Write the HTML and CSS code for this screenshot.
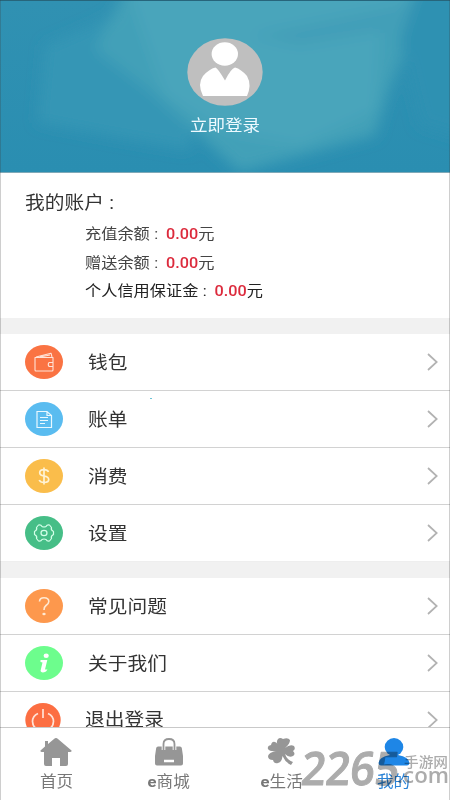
FILE: index.html
```
<!DOCTYPE html>
<html lang="zh-CN">
<head>
<meta charset="utf-8">
<title>我的</title>
<link rel="stylesheet" href="styles.css">
</head>
<body>
<div class="app">
  <header class="hero">
    <svg class="hero-bg" viewBox="0 0 450 172" preserveAspectRatio="none">
      <defs>
        <filter id="soft" x="-10%" y="-10%" width="120%" height="120%"><feGaussianBlur stdDeviation="7"/></filter>
        <linearGradient id="base" x1="0" y1="0" x2="0" y2="1"><stop offset="0" stop-color="#3091b2"/><stop offset="1" stop-color="#2a8eb1"/></linearGradient>
      </defs>
      <rect width="450" height="172" fill="url(#base)"/>
      <g filter="url(#soft)">
        <path d="M45 45 125 10 200 20 190 150 110 136 38 122Z" fill="#3596b5"/>
        <path d="M95 48 130-20H435L390 85 375 135 240 172 205 140 150 90Z" fill="#42a0b8"/>
        <path d="M125-20H420L380 30 375 110 300 145 220 130 165 95Z" fill="#4aa5bb"/>
        <path d="M250 35 420 0 400 28 300 45Z" fill="#429fb8"/>
        <path d="M400 40 420-20H470V140L420 125Z" fill="#2d91b2"/>
      </g>
    </svg>
    <svg class="avatar" viewBox="0 0 76 68">
      <ellipse cx="38" cy="34" rx="37.7" ry="33.7" fill="#bfbfbf"/>
      <ellipse cx="37.8" cy="16" rx="13.2" ry="11.7" fill="#fff"/>
      <path d="M28.5 29.5Q31 30.5 38 42.5 44 30.5 48 29.5 54 31 60 38 65 47 60 58H16Q10 46 16 38 22 31 28.5 29.5Z" fill="#fff"/>
    </svg>
    <div class="login"><span class="wide">立即登录</span></div>
  </header>

  <section class="account">
    <h1><span class="wide">我的账户<i class="colon title-colon">:</i></span></h1>
    <p><span class="wide">充值余额<i class="colon">:</i><b>0.00</b>元</span></p>
    <p><span class="wide">赠送余额<i class="colon">:</i><b>0.00</b>元</span></p>
    <p class="dark"><span class="wide">个人信用保证金<i class="colon">:</i><b>0.00</b>元</span></p>
  </section>

  <main class="menu">
    <div class="group">
      <div class="row">
        <svg class="icon" viewBox="0 0 38 34"><ellipse cx="19" cy="17" rx="19" ry="17" fill="#fa7343"/><g fill="none" stroke="#ffe3d8" stroke-width="1.1" stroke-linejoin="round"><path d="M10 12.5H28V25Q28 26 27 26H11Q10 26 10 25ZM28 17.5H24Q22.500 19.200 24 21.500H28M11 12 26 8.200 27 12M15 12l10-2"/></g></svg>
        <span class="label"><span class="wide">钱包</span></span>
        <svg class="chevron" viewBox="0 0 11 18"><path d="M1 1 9.700 9 1 17"/></svg>
      </div>
      <div class="row">
        <svg class="icon" viewBox="0 0 38 34"><ellipse cx="19" cy="17" rx="19" ry="17" fill="#5abcf0"/><path d="M12 9.500H22L26.500 13.500V25.500H12ZM22 9.500V13.500H26.500M15 15.500H23M15 18.500H23M15 21.500H20" fill="none" stroke="#e9f8ff" stroke-width="1.200"/></svg>
        <span class="label"><span class="wide">账单</span></span>
        <svg class="chevron" viewBox="0 0 11 18"><path d="M1 1 9.700 9 1 17"/></svg>
      </div>
      <div class="row">
        <svg class="icon" viewBox="0 0 38 34"><ellipse cx="19" cy="17" rx="19" ry="17" fill="#fabd4b"/><path d="M23.500 13Q22.500 10.700 19 10.700 14.700 10.700 14.700 13.700 14.700 16.300 19 17 23.700 17.700 23.700 20.500 23.700 23.500 19 23.500 15.200 23.500 14.200 21M19 8.500V25.500" fill="none" stroke="#fff3d5" stroke-width="1.700"/></svg>
        <span class="label"><span class="wide">消费</span></span>
        <svg class="chevron" viewBox="0 0 11 18"><path d="M1 1 9.700 9 1 17"/></svg>
      </div>
      <div class="row">
        <svg class="icon" viewBox="0 0 38 34"><ellipse cx="19" cy="17" rx="19" ry="17" fill="#46be87"/><g fill="none" stroke="#d4ffe9" stroke-width="1.200" stroke-linejoin="round"><path d="M13.500 9Q16 8.500 17 10.500 19 11.500 21 10.500 22 8.500 24.500 9L26.500 11.500Q25.500 14 28.500 15.500V18.500Q25.500 20 26.500 22.500L24.500 25Q22 25.500 21 23.500 19 22.500 17 23.500 16 25.500 13.500 25L11.500 22.500Q12.500 20 9.500 18.500V15.500Q12.500 14 11.500 11.500Z"/><ellipse cx="19" cy="17" rx="3" ry="2.700"/></g></svg>
        <span class="label"><span class="wide">设置</span></span>
        <svg class="chevron" viewBox="0 0 11 18"><path d="M1 1 9.700 9 1 17"/></svg>
      </div>
    </div>
    <div class="group">
      <div class="row">
        <svg class="icon" viewBox="0 0 38 34"><ellipse cx="19" cy="17" rx="19" ry="17" fill="#fd984d"/><path d="M14.500 12.500Q14.700 8.800 19 8.800 23.800 8.800 23.800 12.500 23.800 14.500 21 16.500 19 18 19 21" fill="none" stroke="#ffe9d2" stroke-width="1.600"/><ellipse cx="19" cy="25" rx="1.700" ry="1.300" fill="#ffe9d2"/></svg>
        <span class="label"><span class="wide">常见问题</span></span>
        <svg class="chevron" viewBox="0 0 11 18"><path d="M1 1 9.700 9 1 17"/></svg>
      </div>
      <div class="row">
        <svg class="icon" viewBox="0 0 38 34"><ellipse cx="19" cy="17" rx="19" ry="17" fill="#6dfd8d"/><ellipse cx="21.200" cy="9.700" rx="2.600" ry="2.200" fill="#fff"/><path d="M15.500 14H22.300L20 23.500H22.500L21 25.500Q16.500 27.500 15.500 25L17.500 16.500 15.500 16Z" fill="#fff"/></svg>
        <span class="label"><span class="wide">关于我们</span></span>
        <svg class="chevron" viewBox="0 0 11 18"><path d="M1 1 9.700 9 1 17"/></svg>
      </div>
      <div class="row logout">
        <svg class="icon" viewBox="0 0 36 34"><ellipse cx="18" cy="17" rx="17.700" ry="17" fill="#fc6e42"/><path d="M13 10.500Q7.500 13 7.500 18.500 8 27 18 27 28 27 28.500 18.500 28.500 13 23 10.500M18 6V15" fill="none" stroke="#ffe2d6" stroke-width="1.700"/></svg>
        <span class="label"><span class="wide">退出登录</span></span>
        <svg class="chevron" viewBox="0 0 11 18"><path d="M1 1 9.700 9 1 17"/></svg>
      </div>
    </div>
  </main>

  <nav class="tabs">
    <div class="tab">
      <svg class="tab-icon" viewBox="0 0 32 28"><path d="M16 0Q17 0 18 1L31.500 12.500Q32 14 30 14H28V26Q28 28 26 28H20V20H12V28H6Q4 28 4 26V14H2Q0 14 .5 12.500L5 8.500V3H8V6L14 1Q15 0 16 0Z"/></svg>
      <span class="wide">首页</span>
    </div>
    <div class="tab">
      <svg class="tab-icon" viewBox="0 0 32 28"><path fill-rule="evenodd" d="M5 8.500H27Q28.500 8.500 28.800 10L30 18V25.500Q30 27.500 28 27.500H4Q2 27.500 2 25.500V18L3.200 10Q3.500 8.500 5 8.500ZM11 21.800V24.300H21V21.800Z"/><path d="M10.500 12V6Q10.500 1 16 1T21.500 6V12" fill="none" stroke="#fff" stroke-width="3.600"/><path d="M10.500 12V6Q10.500 1 16 1T21.500 6V12" fill="none" stroke="#969696" stroke-width="1.800"/></svg>
      <span class="wide"><strong>e</strong>商城</span>
    </div>
    <div class="tab">
      <svg class="tab-icon" viewBox="0 0 32 28"><path d="M15 11Q10 5 13 1 15-1 18 1 23-1 25 2 25 6 20 10 25 6 29 8 31 11 28 13 31 16 28 18 24 20 20 16 22 22 28 24L26 27Q20 24 17.500 18 17 24 13 25 9 26 8 22 3 22 3 18 4 14 12 13 5 14 3 11 2 8 6 7 7 3 10 4 13 5 15 11Z"/></svg>
      <span class="wide"><strong>e</strong>生活</span>
    </div>
    <div class="tab active">
      <svg class="tab-icon" viewBox="0 0 32 28"><ellipse cx="16" cy="9" rx="9.300" ry="9"/><path d="M12 15H20V17Q31 19 31.500 25 31 27.500 29 27.500H3Q1 27.500.5 25 1 19 12 17Z"/></svg>
      <span class="wide">我的</span>
    </div>
  </nav>
  <svg class="watermark" viewBox="0 0 150 50">
    <text x="0" y="38.500" class="wm-number" textLength="98" lengthAdjust="spacingAndGlyphs" transform="translate(4 0) skewX(-6)">2265</text>
    <text x="104" y="21" class="wm-name" textLength="44" lengthAdjust="spacingAndGlyphs">手游网</text>
    <text x="97" y="37" class="wm-domain" textLength="52" lengthAdjust="spacingAndGlyphs">.com</text>
  </svg>
  <i class="speck"></i>
</div>
</body>
</html>
```

FILE: styles.css
```
* { box-sizing: border-box; }
body { margin: 0; background: #fff; font-family: Roboto, "Noto Sans CJK SC", sans-serif; }
.app {
  position: relative;
  width: 450px;
  height: 800px;
  display: flex;
  flex-direction: column;
  overflow: hidden;
  color: #333;
}
.app::after {
  content: "";
  position: absolute;
  inset: 0;
  border: solid rgba(60, 60, 60, .25);
  border-width: 0 1px;
  pointer-events: none;
}
.wide { display: inline-block; white-space: nowrap; transform: scaleX(1.095); transform-origin: left; }

.hero {
  position: relative;
  flex: none;
  height: 173px;
  padding-top: 37px;
  display: flex;
  flex-direction: column;
  align-items: center;
  border-top: 1px solid #27657b;
  border-bottom: 1px solid #7fa9b8;
}
.hero-bg { position: absolute; inset: 0; width: 100%; height: 100%; }
.avatar { position: relative; width: 76px; height: 68px; }
.login { position: relative; margin-top: 8px; font-size: 16px; line-height: 24px; color: #eefaff; }
.login .wide { transform-origin: center; }

.account { flex: none; height: 145px; padding: 15px 0 0 25px; }
.account h1 { margin: 0 0 2px; font-size: 18px; font-weight: 400; line-height: 30px; }
.account p { margin: 0 0 0 60px; font-size: 15px; line-height: 28.700px; color: #444; }
.account p .wide { transform: scaleX(1.08); }
.account .dark { color: #222; }
.account b { font-weight: 500; color: #dc2a3c; }
.colon { display: inline-block; width: 15px; padding-left: 4px; font-style: normal; }
.title-colon { padding-left: 5px; }

.menu { flex: none; height: 409px; overflow: hidden; }
.group { border-top: 16px solid #f1f1f1; }
.row {
  height: 57px;
  padding: 0 12px 0 25px;
  display: flex;
  align-items: center;
  border-bottom: 1px solid #d2d2d2;
}
.group .row:last-child { border-bottom-color: #eee; }
.icon { width: 38px; height: 34px; }
.label { flex: 1; margin-left: 24.500px; padding-top: 2px; font-size: 18px; line-height: 28px; }
.chevron { width: 11px; height: 18px; fill: none; stroke: #b2b2b2; stroke-width: 1.700; }
.logout { align-items: flex-start; padding-top: 11px; }
.logout .icon { width: 36px; }
.logout .label { margin: 1px 0 0 24px; }
.logout .chevron { margin-top: 8px; }

.tabs { flex: 1; display: flex; border-top: 1px solid #c9c9c9; }
.tab {
  width: 112.500px;
  padding-top: 10px;
  display: flex;
  flex-direction: column;
  align-items: center;
  font-size: 15.500px;
  line-height: 24px;
  color: #777;
}
.tab .wide { margin-top: 4px; transform: scaleX(1.07); transform-origin: center; }
.tab-icon { width: 32px; height: 28px; fill: #969696; }
.active { color: #2b83d6; }
.active .tab-icon { fill: #1e86e6; }

.watermark { position: absolute; left: 300px; top: 746px; width: 150px; height: 50px; fill: #acacac; mix-blend-mode: multiply; }
.wm-number { font: 600 46px "Open Sans", sans-serif; stroke: #acacac; stroke-width: 1; stroke-linejoin: round; }
.wm-name { font: 500 14px "Noto Sans CJK SC", sans-serif; }
.wm-domain { font: 600 21px "Open Sans", sans-serif; }
.speck { position: absolute; left: 150px; top: 398px; width: 2px; height: 1px; background: #6cc4d6; }
```
